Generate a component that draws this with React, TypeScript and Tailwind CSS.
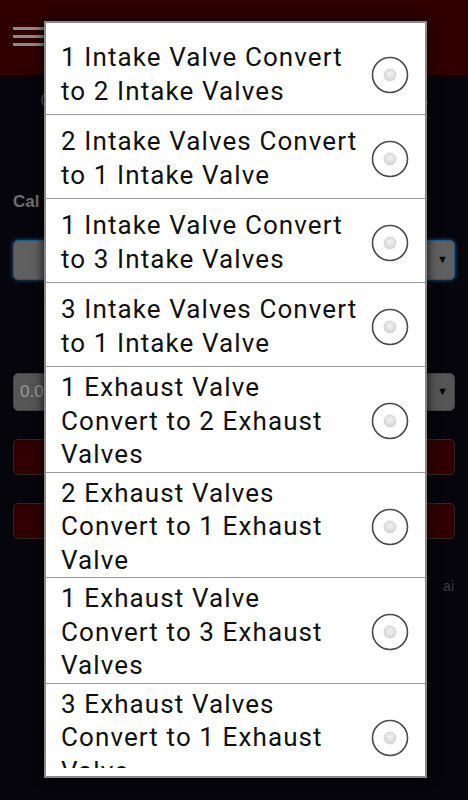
import React from "react";

const options: string[][] = [
  ["1 Intake Valve Convert", "to 2 Intake Valves"],
  ["2 Intake Valves Convert", "to 1 Intake Valve"],
  ["1 Intake Valve Convert", "to 3 Intake Valves"],
  ["3 Intake Valves Convert", "to 1 Intake Valve"],
  ["1 Exhaust Valve", "Convert to 2 Exhaust", "Valves"],
  ["2 Exhaust Valves", "Convert to 1 Exhaust", "Valve"],
  ["1 Exhaust Valve", "Convert to 3 Exhaust", "Valves"],
  ["3 Exhaust Valves", "Convert to 1 Exhaust", "Valve"],
];

function Radio() {
  return (
    <svg width="38" height="38" viewBox="0 0 38 38" className="shrink-0">
      <defs>
        <radialGradient id="dot" cx="50%" cy="40%" r="60%">
          <stop offset="0%" stopColor="#f2f2f2" />
          <stop offset="100%" stopColor="#d4d4d4" />
        </radialGradient>
      </defs>
      <circle cx="19" cy="19" r="17.5" fill="#fff" stroke="#4a4a4a" strokeWidth="1.6" />
      <circle cx="19" cy="19" r="6" fill="url(#dot)" stroke="#cfcfcf" strokeWidth="0.8" />
    </svg>
  );
}

function Arrow() {
  return <span className="text-[11px] text-black leading-none">▼</span>;
}

export default function App() {
  return (
    <div className="relative w-full h-[800px] overflow-hidden bg-[#05050b] font-['Liberation_Sans',sans-serif]">
      {/* page behind the dialog */}
      <div className="h-[75px] bg-[#300000] flex items-start pt-[27px] pl-[13px]">
        <div className="flex flex-col gap-[5px]">
          <div className="w-[32px] h-[3px] bg-[#8a8a8a]" />
          <div className="w-[32px] h-[3px] bg-[#8a8a8a]" />
          <div className="w-[32px] h-[3px] bg-[#8a8a8a]" />
        </div>
      </div>
      <div className="px-[13px]">
        <div className="h-[50px] flex items-center justify-between pl-[27px] pr-[26px] text-[#555] text-[20px]">
          <span>C</span>
          <span className="text-[12px]">.</span>
        </div>
        <div className="mt-[64px] text-[17px] font-bold text-[#6f6f6f]">Cal</div>
        <div className="mt-[25px] h-[40px] rounded-[5px] bg-[#5f5f5f] border border-[#1f5a8c] shadow-[0_0_4px_#1f5a8c] flex items-center justify-end pr-[6px]">
          <Arrow />
        </div>
        <div className="mt-[93px] h-[38px] rounded-[5px] bg-[#555] border border-[#444] flex items-center justify-between pl-[6px] pr-[6px]">
          <span className="text-[17px] text-[#999]">0.0</span>
          <Arrow />
        </div>
        <div className="mt-[28px] h-[36px] rounded-[5px] bg-[#300000] border border-[#2a2a2a]" />
        <div className="mt-[28px] h-[36px] rounded-[5px] bg-[#300000] border border-[#2a2a2a]" />
        <div className="mt-[37px] flex justify-end pr-[1px] text-[14px] text-[#3c3c3c]">ai</div>
      </div>

      {/* option dialog */}
      <div className="absolute top-[21px] left-[44px] w-[383px] h-[757px] bg-white border-2 border-[#8a8a8a] shadow-[0_0_10px_rgba(0,0,0,0.9)] font-['Roboto',sans-serif]">
        <div className="h-full overflow-hidden py-[8px]">
          <div className="h-full overflow-hidden">
            {options.map((lines, i) => (
              <div
                key={i}
                className="min-h-[84px] border-b border-[#9a9a9a] flex items-center pt-[4px] pb-0 pl-[15px] pr-[16px]"
              >
                <div className="flex-1 text-[26px] leading-[33.5px] tracking-[1.1px] text-[#111]">
                  {lines.map((l, j) => (
                    <div key={j} className="whitespace-nowrap">{l}</div>
                  ))}
                </div>
                <Radio />
              </div>
            ))}
          </div>
        </div>
      </div>
    </div>
  );
}
